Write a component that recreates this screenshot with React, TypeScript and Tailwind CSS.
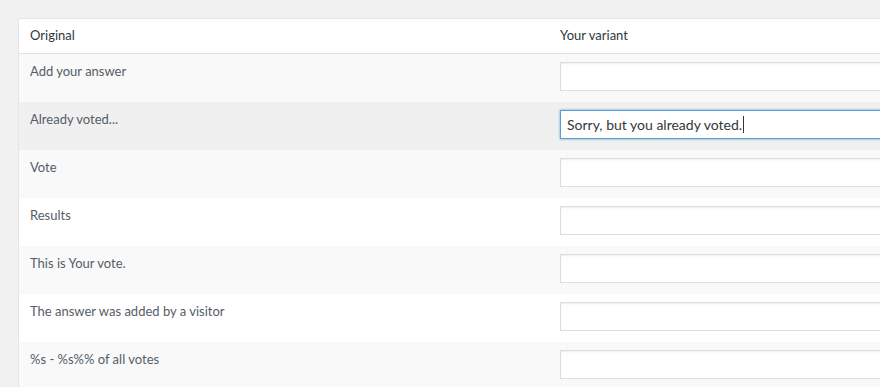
const rows: { label: string; value: string; bg: string; focused?: boolean }[] = [
  { label: 'Add your answer', value: '', bg: 'bg-[#f9f9f9]' },
  { label: 'Already voted...', value: 'Sorry, but you already voted.', bg: 'bg-[#f0f0f0]', focused: true },
  { label: 'Vote', value: '', bg: 'bg-[#f9f9f9]' },
  { label: 'Results', value: '', bg: 'bg-white' },
  { label: 'This is Your vote.', value: '', bg: 'bg-[#f9f9f9]' },
  { label: 'The answer was added by a visitor', value: '', bg: 'bg-white' },
  { label: '%s - %s%% of all votes', value: '', bg: 'bg-[#f9f9f9]' },
];

export default function App() {
  return (
    <div
      className="h-[387px] w-[880px] overflow-hidden bg-[#f1f1f1] pt-[18px] pl-[18px] text-[13px] text-[#555d66]"
      style={{ fontFamily: 'Lato, "Noto Sans", sans-serif' }}
    >
      <div className="w-[1000px] border border-[#e5e5e5] bg-white">
        {/* Cabeçalho */}
        <div className="grid h-[35px] grid-cols-[530px_1fr] items-center border-b border-[#e1e1e1] text-[#32373c]">
          <div className="pl-[11px]">Original</div>
          <div className="pl-[11px]">Your variant</div>
        </div>

        {/* Linhas */}
        {rows.map((row) => (
          <div key={row.label} className={`grid h-[48px] grid-cols-[530px_1fr] ${row.bg}`}>
            <div className="pl-[11px] pt-[8px] leading-[18px]">{row.label}</div>
            <div className="pl-[11px] pt-[8px]">
              <div
                className={
                  row.focused
                    ? 'flex h-[29px] w-[420px] items-center border border-[#5b9dd9] bg-white px-[6px] text-[14px] text-[#32373c] shadow-[0_0_2px_rgba(30,140,190,0.8)]'
                    : 'flex h-[29px] w-[420px] items-center border border-[#ddd] bg-white px-[6px] text-[14px] text-[#32373c] shadow-[inset_0_1px_2px_rgba(0,0,0,0.07)]'
                }
              >
                {row.value}
                {row.focused && <span className="ml-[1px] inline-block h-[17px] w-px bg-[#32373c]" />}
              </div>
            </div>
          </div>
        ))}
      </div>
    </div>
  );
}
